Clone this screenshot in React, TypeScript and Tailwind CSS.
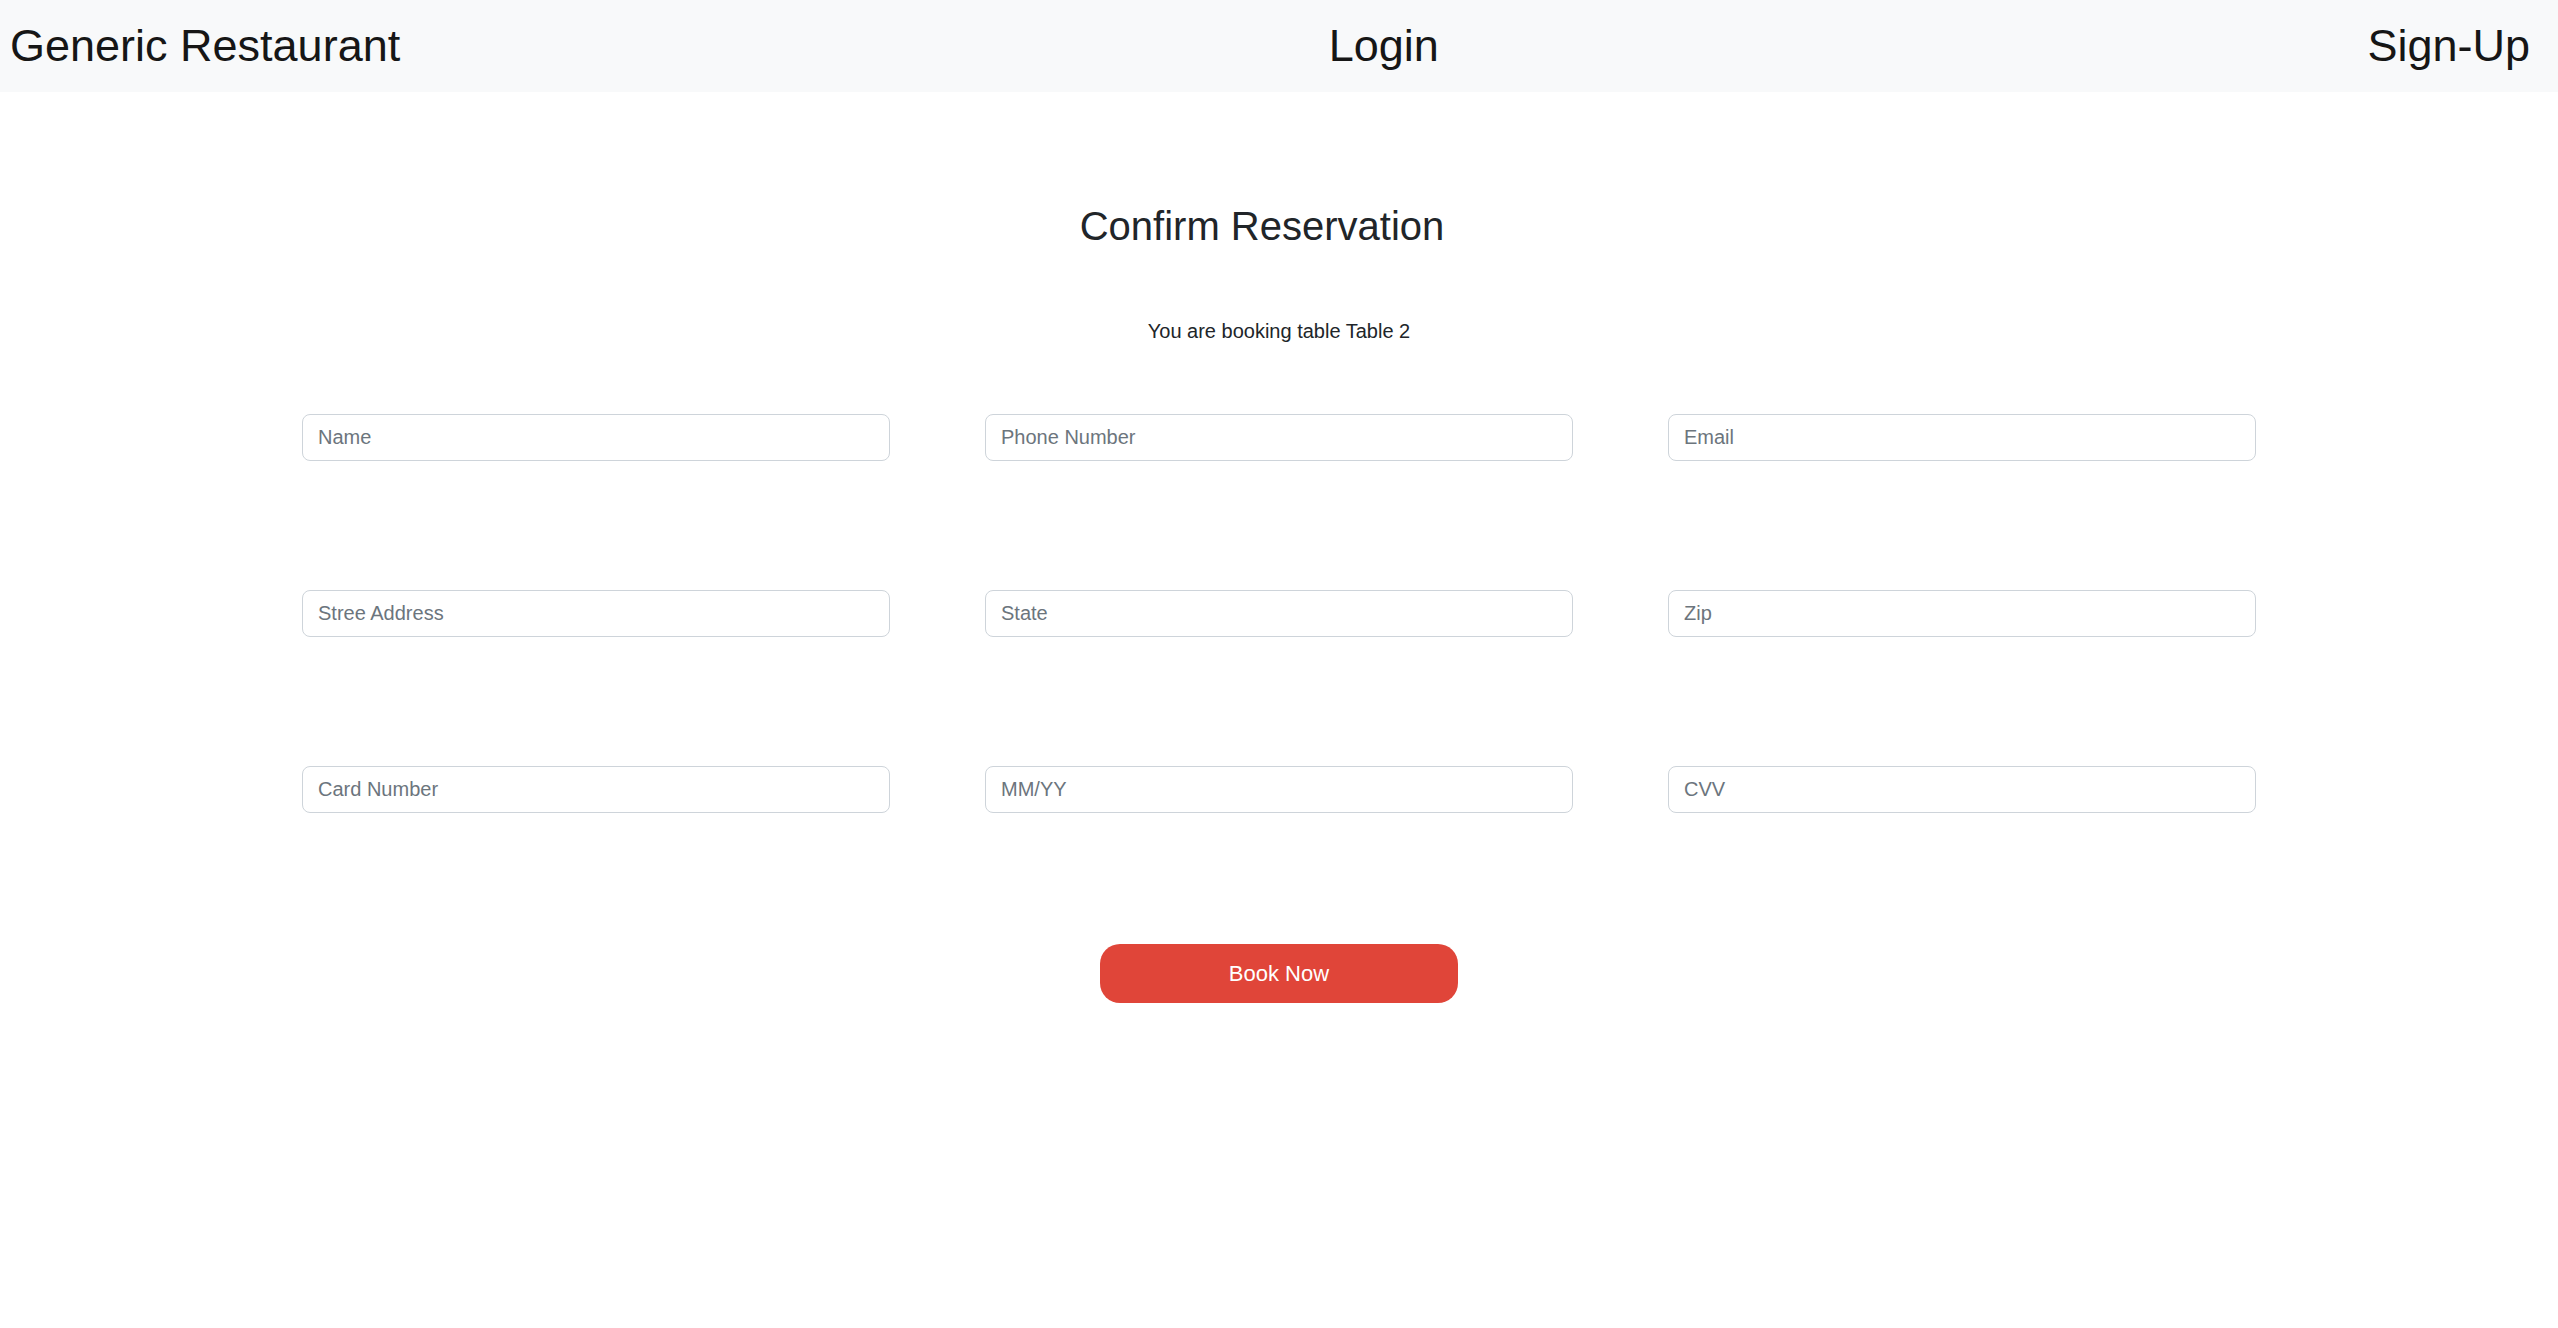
const fields = [
  "Name",
  "Phone Number",
  "Email",
  "Stree Address",
  "State",
  "Zip",
  "Card Number",
  "MM/YY",
  "CVV",
];

function NavBar() {
  return (
    <nav className="flex h-[92px] items-center justify-between bg-[#f8f9fa] pl-[10px] pr-[28px] text-[45px] leading-[48px] text-[#161616]">
      <a href="#">Generic Restaurant</a>
      <a href="#">Login</a>
      <a href="#">Sign-Up</a>
    </nav>
  );
}

export default function App() {
  return (
    <div className="min-h-screen bg-white font-['Liberation_Sans',Arial,sans-serif] text-[#212529]">
      <NavBar />
      <main className="flex flex-col items-center">
        <h1 className="mt-[110px] pr-[34px] text-[40px] leading-[48px]">Confirm Reservation</h1>
        <p className="mt-[66px] text-[20px] leading-[30px]">You are booking table Table 2</p>
        <form className="mt-[68px] flex flex-col items-center">
          <div className="grid w-[1954px] grid-cols-3 gap-x-[95px] gap-y-[129px]">
            {fields.map((f) => (
              <input
                key={f}
                type="text"
                placeholder={f}
                className="h-[47px] w-full rounded-[8px] border border-[#ced4da] bg-white px-[15px] text-[20px] text-[#212529] outline-none placeholder:text-[#6c757d]"
              />
            ))}
          </div>
          <button
            type="button"
            className="mt-[131px] h-[59px] w-[358px] rounded-[20px] bg-[#e04539] text-[22px] text-white"
          >
            Book Now
          </button>
        </form>
      </main>
    </div>
  );
}
